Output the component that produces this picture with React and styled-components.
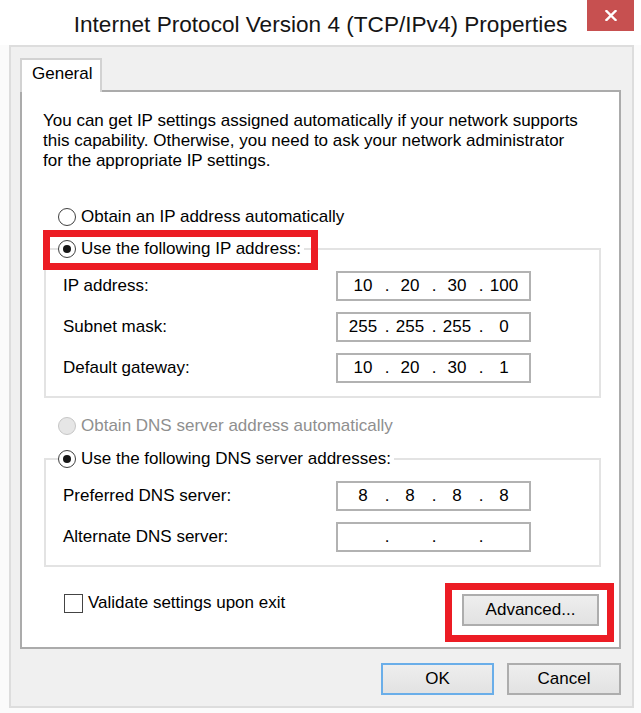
import React from 'react';
import styled, { createGlobalStyle } from 'styled-components';

const GlobalStyle = createGlobalStyle`
  html, body { margin: 0; padding: 0; background: #fbfbfb; }
  body { font-family: "Liberation Sans", Arial, sans-serif; color: #000; }
  *, *::before, *::after { box-sizing: border-box; }
`;

const Window = styled.div`
  width: 641px;
  height: 713px;
  background: #fbfbfb;
  display: flex;
  flex-direction: column;
`;

const TitleBar = styled.div`
  height: 45px;
  flex: none;
  display: grid;
  grid-template-columns: 1fr auto 1fr;
  align-items: start;
  background: #fff;
`;

const Title = styled.div`
  grid-column: 2;
  padding-top: 4px;
  font-size: 22.6px;
  line-height: 41px;
  color: #151515;
  white-space: nowrap;
`;

const CloseButton = styled.div`
  grid-column: 3;
  justify-self: end;
  margin-right: 7px;
  width: 47px;
  height: 31px;
  background: #c75050;
  display: flex;
  align-items: center;
  justify-content: center;
`;

const Dialog = styled.div`
  flex: 1;
  margin: 0 7px 5px 9px;
  background: #f0f0f0;
  border: 2px solid #dddddd;
  padding: 11px 11px 11px 9px;
  display: flex;
  flex-direction: column;
`;

const TabRow = styled.div`
  display: flex;
  position: relative;
  z-index: 1;
`;

const Tab = styled.div`
  width: 82px;
  height: 34px;
  margin-bottom: -2px;
  background: #fff;
  border: 2px solid #d2d2d2;
  border-bottom: none;
  padding-left: 10px;
  font-size: 17px;
  line-height: 28px;
`;

const Pane = styled.div`
  height: 559px;
  background: #fff;
  border: 2px solid #ababab;
  padding: 19px 18px 0 21px;
  display: flex;
  flex-direction: column;
  font-size: 17px;
  line-height: 20px;
`;

const Description = styled.p`
  margin: 0;
  white-space: nowrap;
`;

const RadioRow = styled.div`
  display: flex;
  align-items: center;
  gap: 5px;
  height: 20px;
  margin-left: ${p => p.$indent || 0}px;
  margin-top: ${p => p.$top || 0}px;
  color: ${p => (p.$disabled ? '#8f8f8f' : '#000')};
  white-space: nowrap;
`;

const RadioCircle = styled.span`
  flex: none;
  width: 18px;
  height: 18px;
  border-radius: 50%;
  border: 1.5px solid ${p => (p.$disabled ? '#c6c6c6' : '#3f3f3f')};
  background: ${p => (p.$disabled ? '#e6e6e6' : '#fff')};
  display: flex;
  align-items: center;
  justify-content: center;
  &::after {
    content: '';
    display: ${p => (p.$checked ? 'block' : 'none')};
    width: 8px;
    height: 8px;
    border-radius: 50%;
    background: #161616;
  }
`;

const GroupBox = styled.div`
  margin: ${p => p.$top}px 0 0 1px;
  border: 2px solid #e3e3e3;
  padding: 0 68px 13px 17px;
  display: flex;
  flex-direction: column;
`;

const Legend = styled.div`
  position: relative;
  align-self: flex-start;
  margin: -11px 0 0 -5px;
  padding-right: 3px;
  background: #fff;
`;

const Mark = styled.div`
  position: absolute;
  left: ${p => p.$left}px;
  top: ${p => p.$top}px;
  width: ${p => p.$width}px;
  height: ${p => p.$height}px;
  border: 7px solid #ec1c24;
  pointer-events: none;
`;

const FieldGrid = styled.div`
  margin-top: 12px;
  display: grid;
  grid-template-columns: 1fr 195px;
  row-gap: 11px;
  align-items: center;
`;

const FieldLabel = styled.span`
  white-space: nowrap;
`;

const IpBox = styled.div`
  width: 195px;
  height: 30px;
  background: #fff;
  border: 2px solid #b2b2b2;
  padding-left: 7px;
  display: grid;
  grid-template-columns: 36px 11px 36px 11px 36px 11px 36px;
  align-items: center;
`;

const Octet = styled.span`
  text-align: center;
`;

const Dot = styled.span`
  text-align: center;
  padding-left: 1px;
`;

const BottomRow = styled.div`
  margin-top: 26px;
  padding: 0 2px 0 21px;
  display: flex;
  justify-content: space-between;
  align-items: flex-start;
`;

const CheckRow = styled.label`
  display: flex;
  align-items: center;
  gap: 5px;
  height: 20px;
  white-space: nowrap;
`;

const CheckBox = styled.span`
  width: 19px;
  height: 19px;
  border: 1.5px solid #444;
  background: #fff;
`;

const Highlight = styled.div`
  position: relative;
  margin-top: 1px;
`;

const Button = styled.div`
  width: ${p => p.$width}px;
  height: 32px;
  border: 2px solid ${p => (p.$primary ? '#6aaee9' : '#adadad')};
  background: linear-gradient(#eeeeee, #e2e2e2);
  display: flex;
  align-items: center;
  justify-content: center;
  font-size: 17px;
  line-height: 20px;
  padding-bottom: 1px;
`;

const Footer = styled.div`
  margin-top: 14px;
  display: flex;
  justify-content: flex-end;
  gap: 13px;
`;

const Radio = ({ checked, disabled }) => (
  <RadioCircle $checked={checked} $disabled={disabled} />
);

const IpField = ({ octets }) => (
  <IpBox>
    {octets.map((o, i) => (
      <React.Fragment key={i}>
        {i > 0 && <Dot>.</Dot>}
        <Octet>{o}</Octet>
      </React.Fragment>
    ))}
  </IpBox>
);

export default function App() {
  return (
    <>
      <GlobalStyle />
      <Window>
        <TitleBar>
          <Title>Internet Protocol Version 4 (TCP/IPv4) Properties</Title>
          <CloseButton>
            <svg width="12" height="11" viewBox="0 0 12 11">
              <path d="M1.5 1 L10.5 10 M10.5 1 L1.5 10" stroke="#fff" strokeWidth="2.4" strokeLinecap="square" />
            </svg>
          </CloseButton>
        </TitleBar>
        <Dialog>
          <TabRow>
            <Tab>General</Tab>
          </TabRow>
          <Pane>
            <Description>
              You can get IP settings assigned automatically if your network supports
              <br />
              this capability. Otherwise, you need to ask your network administrator
              <br />
              for the appropriate IP settings.
            </Description>

            <RadioRow $indent={15} $top={36}>
              <Radio />
              Obtain an IP address automatically
            </RadioRow>

            <GroupBox $top={21}>
              <Legend>
                <RadioRow>
                  <Radio checked />
                  Use the following IP address:
                </RadioRow>
                <Mark $left={-15} $top={-9} $width={275} $height={40} />
              </Legend>
              <FieldGrid>
                <FieldLabel>IP address:</FieldLabel>
                <IpField octets={['10', '20', '30', '100']} />
                <FieldLabel>Subnet mask:</FieldLabel>
                <IpField octets={['255', '255', '255', '0']} />
                <FieldLabel>Default gateway:</FieldLabel>
                <IpField octets={['10', '20', '30', '1']} />
              </FieldGrid>
            </GroupBox>

            <RadioRow $indent={15} $top={18} $disabled>
              <Radio disabled />
              Obtain DNS server address automatically
            </RadioRow>

            <GroupBox $top={22}>
              <Legend>
                <RadioRow>
                  <Radio checked />
                  Use the following DNS server addresses:
                </RadioRow>
              </Legend>
              <FieldGrid>
                <FieldLabel>Preferred DNS server:</FieldLabel>
                <IpField octets={['8', '8', '8', '8']} />
                <FieldLabel>Alternate DNS server:</FieldLabel>
                <IpField octets={['', '', '', '']} />
              </FieldGrid>
            </GroupBox>

            <BottomRow>
              <CheckRow>
                <CheckBox />
                Validate settings upon exit
              </CheckRow>
              <Highlight>
                <Button $width={137}>Advanced...</Button>
                <Mark $left={-17} $top={-11} $width={169} $height={59} />
              </Highlight>
            </BottomRow>
          </Pane>
          <Footer>
            <Button $width={113} $primary>OK</Button>
            <Button $width={114}>Cancel</Button>
          </Footer>
        </Dialog>
      </Window>
    </>
  );
}
